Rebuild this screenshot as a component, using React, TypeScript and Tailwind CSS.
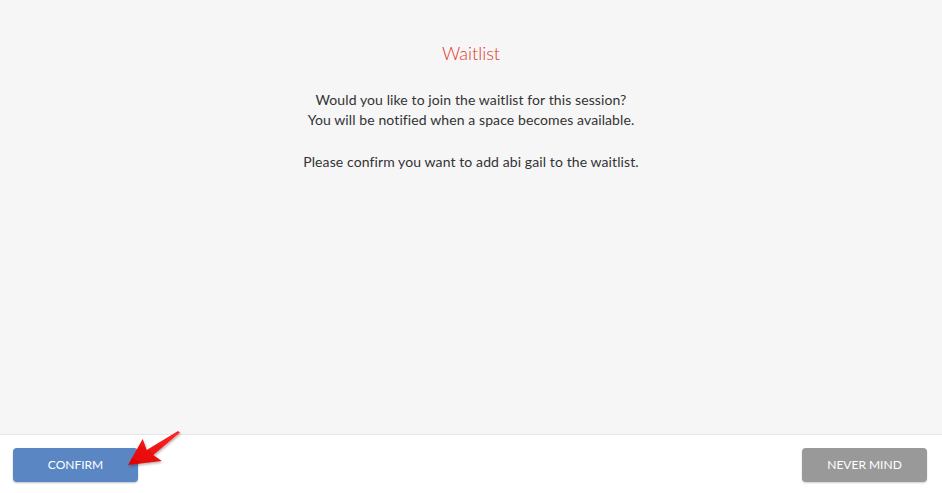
import React from "react";

const Arrow: React.FC = () => (
  <svg
    className="absolute left-[120px] top-[428px] pointer-events-none"
    width="64"
    height="44"
    viewBox="0 0 64 44"
  >
    <defs>
      <linearGradient id="arrowRed" x1="0" y1="1" x2="1" y2="0">
        <stop offset="0" stopColor="#e00000" />
        <stop offset="1" stopColor="#ff2a2a" />
      </linearGradient>
      <filter id="arrowShadow" x="-20%" y="-20%" width="140%" height="140%">
        <feDropShadow dx="1" dy="1.5" stdDeviation="1" floodColor="#000" floodOpacity="0.3" />
      </filter>
    </defs>
    <polygon
      points="8,37 22.7,11 26.7,22 58,3 60,4.5 33.3,27 41.7,33"
      fill="url(#arrowRed)"
      filter="url(#arrowShadow)"
    />
  </svg>
);

export default function App() {
  return (
    <div
      className="relative flex flex-col w-full h-[493px] bg-white text-[#333]"
      style={{ fontFamily: "Lato, 'Open Sans', sans-serif" }}
    >
      {/* contenido */}
      <div className="flex-1 bg-[#f6f6f6] border-b border-[#e6e6e6] flex flex-col items-center pt-[41px] text-center">
        <h1 className="text-[18px] leading-[24px] text-[#e0362a] font-light">Waitlist</h1>
        <div className="mt-[25px] text-[14px] leading-[20px] tracking-[0.1px]">
          <p>Would you like to join the waitlist for this session?</p>
          <p>You will be notified when a space becomes available.</p>
          <p className="mt-[22px]">Please confirm you want to add abi gail to the waitlist.</p>
        </div>
      </div>

      {/* botones */}
      <div className="h-[58px] flex items-center justify-between pl-[13px] pr-[15px] pt-[1px]">
        <button className="w-[125px] h-[34px] rounded-[4px] bg-[#5a86c4] text-white text-[12px] uppercase shadow-[0_1px_2px_rgba(0,0,0,0.25)]">
          Confirm
        </button>
        <button className="w-[125px] h-[34px] rounded-[4px] bg-[#999999] text-white text-[12px] uppercase shadow-[0_1px_2px_rgba(0,0,0,0.2)]">
          Never mind
        </button>
      </div>

      <Arrow />
    </div>
  );
}
